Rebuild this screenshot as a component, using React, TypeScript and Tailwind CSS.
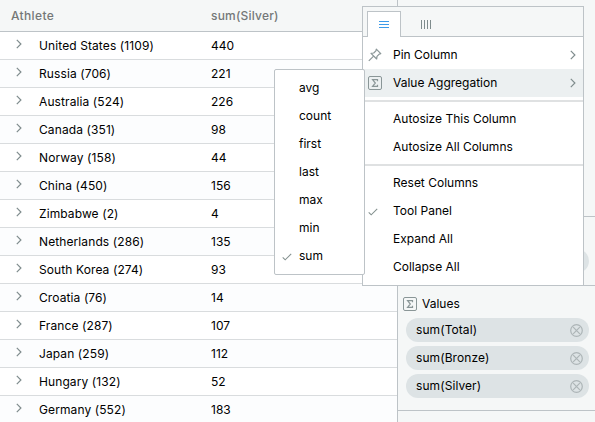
import type { ReactNode } from "react";

const rows: [string, string][] = [
  ["United States (1109)", "440"],
  ["Russia (706)", "221"],
  ["Australia (524)", "226"],
  ["Canada (351)", "98"],
  ["Norway (158)", "44"],
  ["China (450)", "156"],
  ["Zimbabwe (2)", "4"],
  ["Netherlands (286)", "135"],
  ["South Korea (274)", "93"],
  ["Croatia (76)", "14"],
  ["France (287)", "107"],
  ["Japan (259)", "112"],
  ["Hungary (132)", "52"],
  ["Germany (552)", "183"],
];

function Chevron() {
  return (
    <svg width="6" height="10" viewBox="0 0 6 10" fill="none" stroke="#7f8c8d" strokeWidth="1.2">
      <path d="M0.8 0.9 L4.9 5 L0.8 9.1" />
    </svg>
  );
}

function Check() {
  return (
    <svg className="mt-0.5" width="10" height="8" viewBox="0 0 10 8" fill="none" stroke="#84918f" strokeWidth="1.1">
      <path d="M0.7 4.4 L3.2 6.8 L9.2 0.9" />
    </svg>
  );
}

function Sigma() {
  return (
    <svg width="14" height="14" viewBox="0 0 14 14" fill="none" stroke="#8a9697" strokeWidth="1">
      <rect x="0.5" y="0.5" width="13" height="13" rx="1.5" />
      <path strokeWidth="1.2" d="M9.5 5.2 V3.7 H4.6 L7.3 7 L4.6 10.3 H9.5 V8.8" />
    </svg>
  );
}

function Pin() {
  return (
    <svg width="14" height="14" viewBox="0 0 14 14" fill="none" stroke="#8a9697" strokeWidth="1.2" strokeLinejoin="round">
      <path d="M8.3 1.2 L12.8 5.7 L11.2 6.1 L9 8.3 L8.7 11 L3 5.3 L5.7 5 L7.9 2.8 Z" />
      <path d="M5.6 8.1 L0.8 12.9" />
    </svg>
  );
}

function Remove() {
  return (
    <svg width="13" height="13" viewBox="0 0 13 13" fill="none" stroke="#adb5b7" strokeWidth="1.2">
      <circle cx="6.5" cy="6.5" r="5.8" />
      <path d="M3.2 3.2 L9.8 9.8 M9.8 3.2 L3.2 9.8" />
    </svg>
  );
}

function MenuItem({ icon, label, arrow, active }: { icon?: ReactNode; label: string; arrow?: boolean; active?: boolean }) {
  return (
    <div className={`flex h-7 items-center pl-[5px] pr-[7px] ${active ? "bg-[#ecf0f1]" : ""}`}>
      <span className="flex w-[25px] items-center">{icon}</span>
      <span className="flex-1">{label}</span>
      {arrow && <Chevron />}
    </div>
  );
}

function Separator() {
  return <div className="my-[3px] h-0.5 bg-[#dfe1e2]" />;
}

function Pill({ label }: { label: string }) {
  return (
    <div className="ml-2 flex h-6 w-[183px] items-center justify-between rounded-full bg-[#dde3e5] pl-2.5 pr-1.5">
      <span className="tracking-[0.08px]">{label}</span>
      <Remove />
    </div>
  );
}

export default function App() {
  return (
    <div className="relative flex h-[422px] w-[595px] overflow-hidden bg-[#f5f7f7] font-['Inter',sans-serif] text-[12px] leading-4 text-black">
      <div className="w-[397px] shrink-0 bg-white">
        <div className="flex h-8 items-center border-b border-[#bdc3c7] bg-[#f5f7f7] font-medium text-[#747778]">
          <span className="w-[200px] pl-[11px] tracking-[0.35px]">Athlete</span>
          <span className="pl-[11px] tracking-[0.2px]">sum(Silver)</span>
        </div>
        {rows.map(([name, value]) => (
          <div key={name} className="flex h-7 items-center border-b border-[#d9dcde] odd:bg-[#fcfdfe]">
            <span className="w-[39px] pb-[3px] pl-4">
              <Chevron />
            </span>
            <span className="w-[172px] tracking-[0.1px]">{name}</span>
            <span>{value}</span>
          </div>
        ))}
      </div>

      <div className="flex-1 border-l border-[#bdc3c7]">
        <div className="h-[217px] border-b border-[#bdc3c7]" />
        <div className="border-b border-[#bdc3c7] pb-3 pt-8">
          <div className="ml-2 h-6 w-[183px] rounded-full bg-[#dde3e5]" />
        </div>
        <div className="border-b border-[#bdc3c7] pb-3">
          <div className="flex h-8 items-center pl-[5px] pt-1">
            <Sigma />
            <span className="ml-[5px]">Values</span>
          </div>
          <div className="flex flex-col gap-1">
            <Pill label="sum(Total)" />
            <Pill label="sum(Bronze)" />
            <Pill label="sum(Silver)" />
          </div>
        </div>
      </div>

      <div className="absolute left-[362px] top-[6px] h-[280px] w-[222px] border border-[#bdc3c7] bg-white">
        <div className="flex h-[30px] items-end bg-[#f5f7f7]">
          <div className="h-full w-1 border-b border-[#bdc3c7]" />
          <div className="flex h-[26px] w-[34px] items-center justify-center border-x border-t border-[#bdc3c7] bg-white">
            <svg width="10" height="7" viewBox="0 0 10 7" fill="#3d9be9">
              <path d="M0 0h10v1H0zM0 3h10v1H0zM0 6h10v1H0z" />
            </svg>
          </div>
          <div className="flex h-full flex-1 items-center border-b border-[#bdc3c7] pl-5 pt-[5px]">
            <svg width="10" height="9" viewBox="0 0 10 9" fill="#7f8c8d">
              <path d="M0 0h1v9H0zM3 0h1v9H3zM6 0h1v9H6zM9 0h1v9H9z" />
            </svg>
          </div>
        </div>
        <div className="pt-1">
          <MenuItem icon={<Pin />} label="Pin Column" arrow />
          <MenuItem icon={<Sigma />} label="Value Aggregation" arrow active />
          <Separator />
          <MenuItem label="Autosize This Column" />
          <MenuItem label="Autosize All Columns" />
          <Separator />
          <MenuItem label="Reset Columns" />
          <MenuItem icon={<Check />} label="Tool Panel" />
          <MenuItem label="Expand All" />
          <MenuItem label="Collapse All" />
        </div>
      </div>

      <div className="absolute left-[274px] top-[69px] h-[206px] w-[91px] rounded-[2px] border border-[#bdc3c7] bg-white py-1">
        {["avg", "count", "first", "last", "max", "min", "sum"].map((fn) => (
          <div key={fn} className="flex h-7 items-center">
            <span className="w-6 pl-[7px]">{fn === "sum" && <Check />}</span>
            <span>{fn}</span>
          </div>
        ))}
      </div>
    </div>
  );
}
